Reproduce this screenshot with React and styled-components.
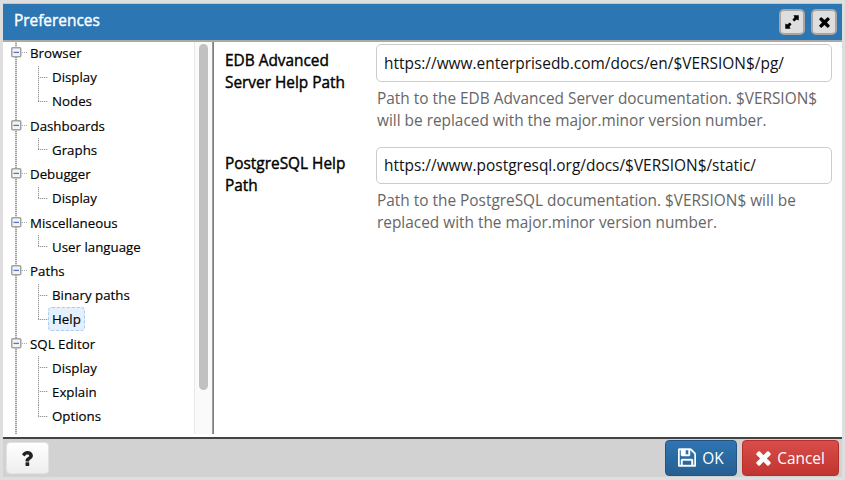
import React from 'react';
import styled, { createGlobalStyle, css } from 'styled-components';

const Global = createGlobalStyle`
  * { box-sizing: border-box; }
  body { margin: 0; background: #dedede; font-family: "Open Sans", sans-serif; color: #111; overflow: hidden; }
  button, input { font-family: inherit; }
`;

const Dialog = styled.div`
  width: 845px;
  height: 480px;
  padding: 3px;
  display: flex;
  flex-direction: column;
  background: #dedede;
`;

const Header = styled.header`
  flex: none;
  height: 39px;
  padding: 0 5px 0 11px;
  display: flex;
  align-items: center;
  background: #2c76b4;
  border-top: 1px solid #c9c4be;
  border-bottom: 2px solid #aaa9a8;
`;

const Title = styled.h1`
  flex: 1;
  margin: 0;
  padding-bottom: 2px;
  font-size: 15.4px;
  line-height: 20px;
  font-weight: 400;
  color: #fff;
  -webkit-text-stroke: 0.4px #fff;
`;

const WindowButton = styled.button`
  width: 26px;
  height: 26px;
  margin-left: 6px;
  padding: 0;
  display: flex;
  align-items: center;
  justify-content: center;
  background: #dedede;
  border: 2px solid #a9a5a3;
  border-radius: 5px;
  color: #000;
`;

const Body = styled.main`
  flex: none;
  height: 395px;
  padding-bottom: 3px;
  display: flex;
  background: #fff;
`;

const Sidebar = styled.nav`
  width: 191px;
  overflow: hidden;
`;

const TreeList = styled.ul`
  list-style: none;
  margin: -0.6px 0 0;
  padding: 0 0 6px 5px;
  background: repeating-linear-gradient(#a4a4a4 0 1px, #dedede 1px 2px) 12px 0 / 2px 100% no-repeat;
`;

const rowText = css`
  height: 24.23px;
  display: flex;
  align-items: center;
  font-size: 13.3px;
  line-height: 22px;
  color: #000;
  -webkit-text-stroke: 0.15px #000;
`;

const Group = styled.div`
  ${rowText}
  padding-bottom: 1px;
`;

const Toggle = styled.svg`
  width: 17px;
  height: 11px;
  margin: -1px 2px 0 3px;
  flex: none;
`;

const Children = styled.ul`
  list-style: none;
  margin: 0;
  padding: 0 0 0 29.5px;
`;

const Leaf = styled.li`
  ${rowText}
`;

const Branch = styled.span`
  width: 10.5px;
  align-self: stretch;
  flex: none;
  background:
    repeating-linear-gradient(#999 0 1px, #e2e2e2 1px 2px) 0 0 / 1px ${p => (p.$last ? '11px' : '100%')} no-repeat,
    repeating-linear-gradient(90deg, #999 0 1px, #e2e2e2 1px 2px) 0 11px / 12px 1px no-repeat;
`;

const LeafLabel = styled.span`
  margin-top: -1px;
  padding: 0 3px;
  border: 1px dashed ${p => (p.$selected ? '#a9cbf3' : 'transparent')};
  border-radius: 4px;
  background: ${p => (p.$selected ? '#e4f0fd' : 'transparent')};
`;

const ScrollTrack = styled.div`
  width: 18px;
  padding: 2px 3px 0 4px;
  background: #fafafa;
  border-left: 1px solid #e8e8e8;
`;

const ScrollThumb = styled.div`
  width: 9px;
  height: 346px;
  border-radius: 5px;
  background: #c1c1c1;
`;

const Divider = styled.div`
  width: 2px;
  background: linear-gradient(90deg, #9c9c9c 50%, #808080 50%);
`;

const Form = styled.form`
  flex: 1;
  padding: 2px 10px 0 11px;
`;

const Field = styled.div`
  height: 102.5px;
  display: grid;
  grid-template-columns: 151px 1fr;
`;

const Label = styled.label`
  width: 135px;
  padding-top: 6px;
  font-size: 15.4px;
  line-height: 22px;
  color: #000;
  -webkit-text-stroke: 0.4px #000;
`;

const Input = styled.input`
  display: block;
  width: 456px;
  height: 37.5px;
  padding: 0 7px;
  border: 1px solid #ccc;
  border-radius: 5px;
  background: #fff;
  outline: 0;
  font-size: 15.45px;
  color: #111;
`;

const Help = styled.p`
  margin: 6px 0 0 1px;
  font-size: 15.4px;
  line-height: 22px;
  color: #666;
  white-space: nowrap;
`;

const Footer = styled.footer`
  flex: 1;
  padding: 1px 3px 1px 3px;
  display: flex;
  align-items: center;
  gap: 5px;
  background: #d2d2d2;
  border-top: 2px solid #444;
`;

const Spacer = styled.div`
  flex: 1;
`;

const tones = {
  plain: css`
    width: 43px; height: 32px; color: #222;
    background: linear-gradient(#fff, #eee);
    border: 1px solid #e2e2e2;
  `,
  primary: css`
    width: 72px; height: 36px; color: #fff;
    background: linear-gradient(#2e75b3, #265f90);
    border: 1px solid #245580;
  `,
  danger: css`
    width: 97px; height: 36px; color: #fff;
    background: linear-gradient(#d84e4a, #c23430);
    border: 1px solid #b92c28;
  `,
};

const Button = styled.button`
  flex: none;
  padding: 0;
  display: flex;
  align-items: center;
  justify-content: center;
  gap: 6px;
  border-radius: 4px;
  font-size: 15.4px;
  ${p => tones[p.$tone]}
`;

const Glyph = styled.svg`
  display: block;
  fill: currentColor;
`;

const SaveIcon = () => (
  <Glyph width="18" height="21" viewBox="0 80 1536 1792" stroke="currentColor" strokeWidth="40">
    <path d="M384 1536h768v-384H384v384zm896 0h128V640q0-14-10-38.500t-20-34.500l-281-281q-10-10-34-20t-39-10v416q0 40-28 68t-68 28H352q-40 0-68-28t-28-68V256H128v1280h128v-416q0-40 28-68t68-28h832q40 0 68 28t28 68v416zM896 608V288q0-13-9.500-22.500T864 256H672q-13 0-22.500 9.500T640 288v320q0 13 9.500 22.500t22.500 9.500h192q13 0 22.500-9.500T896 608zm640 32v928q0 40-28 68t-68 28H96q-40 0-68-28t-28-68V224q0-40 28-68t68-28h928q40 0 88 20t76 48l280 280q28 28 48 76t20 88z" />
  </Glyph>
);

const CrossIcon = ({ size }) => (
  <Glyph width={size} height={size} viewBox="100 334 1208 1228">
    <path d="M1298 1322q0 40-28 68l-136 136q-28 28-68 28t-68-28l-294-294-294 294q-28 28-68 28t-68-28l-136-136q-28-28-28-68t28-68l294-294-294-294q-28-28-28-68t28-68l136-136q28-28 68-28t68 28l294 294 294-294q28-28 68-28t68 28l136 136q28 28 28 68t-28 68l-294 294 294 294q28 28 28 68z" transform="translate(0 -12)" />
  </Glyph>
);

const ExpandIcon = () => (
  <Glyph width="14" height="14" viewBox="0 0 14 14">
    <path d="M8.500 0.300H13.700V5.500L11.700 4.500L9.300 6.600L7.400 4.700L9.500 2.300ZM5.500 13.700H0.300V8.500L2.300 9.500L4.700 7.400L6.600 9.300L4.500 11.700Z" />
  </Glyph>
);

const QuestionIcon = () => (
  <Glyph width="11" height="15" viewBox="80 193 950 1279" preserveAspectRatio="none">
    <path d="M704 1192v240q0 16-12 28t-28 12H424q-16 0-28-12t-12-28v-240q0-16 12-28t28-12h240q16 0 28 12t12 28zm316-600q0 54-15.500 101t-35 76.500-55 59.500-57.500 43.500-61 35.500q-41 23-68.500 65T700 1041q0 17-12 32.500T660 1089H420q-15 0-25.500-18.500T384 1033v-45q0-83 65-156.500T592 723q59-27 84-56t25-76q0-42-46.500-74T547 485q-65 0-108 29-35 25-107 115-13 16-31 16-12 0-25-8L112 512q-13-10-15.500-25t5.500-28q160-266 464-266 80 0 161 31t146 83 106 127.500 41 158.500z" />
  </Glyph>
);

const ToggleIcon = () => (
  <Toggle viewBox="0 0 17 11">
    <rect x=".75" y=".75" width="9" height="9" rx="1" fill="#f4f4f4" stroke="#a2a2a2" strokeWidth="1.5" />
    <path d="M2.500 5.400h5.500" stroke="#5577cc" strokeWidth="1.300" />
    <path d="M11 5.500h5.500" stroke="#aaa" strokeDasharray="1 1" />
  </Toggle>
);

const tree = [
  ['Browser', ['Display', 'Nodes']],
  ['Dashboards', ['Graphs']],
  ['Debugger', ['Display']],
  ['Miscellaneous', ['User language']],
  ['Paths', ['Binary paths', 'Help']],
  ['SQL Editor', ['Display', 'Explain', 'Options']],
];

const fields = [
  {
    id: 'edb',
    label: 'EDB Advanced Server Help Path',
    value: 'https://www.enterprisedb.com/docs/en/$VERSION$/pg/',
    help: ['Path to the EDB Advanced Server documentation. $VERSION$', 'will be replaced with the major.minor version number.'],
  },
  {
    id: 'pg',
    label: 'PostgreSQL Help Path',
    value: 'https://www.postgresql.org/docs/$VERSION$/static/',
    help: ['Path to the PostgreSQL documentation. $VERSION$ will be', 'replaced with the major.minor version number.'],
  },
];

export default function App() {
  return (
    <Dialog>
      <Global />
      <Header>
        <Title>Preferences</Title>
        <WindowButton aria-label="Maximize"><ExpandIcon /></WindowButton>
        <WindowButton aria-label="Close"><CrossIcon size={11} /></WindowButton>
      </Header>
      <Body>
        <Sidebar>
          <TreeList>
            {tree.map(([name, items]) => (
              <li key={name}>
                <Group><ToggleIcon />{name}</Group>
                <Children>
                  {items.map((item, i) => (
                    <Leaf key={item}>
                      <Branch $last={i === items.length - 1} />
                      <LeafLabel $selected={item === 'Help'}>{item}</LeafLabel>
                    </Leaf>
                  ))}
                </Children>
              </li>
            ))}
          </TreeList>
        </Sidebar>
        <ScrollTrack><ScrollThumb /></ScrollTrack>
        <Divider />
        <Form>
          {fields.map(f => (
            <Field key={f.id}>
              <Label htmlFor={f.id}>{f.label}</Label>
              <div>
                <Input id={f.id} defaultValue={f.value} spellCheck={false} />
                <Help>{f.help[0]}<br />{f.help[1]}</Help>
              </div>
            </Field>
          ))}
        </Form>
      </Body>
      <Footer>
        <Button $tone="plain" aria-label="Help"><QuestionIcon /></Button>
        <Spacer />
        <Button $tone="primary"><SaveIcon />OK</Button>
        <Button $tone="danger"><CrossIcon size={15} />Cancel</Button>
      </Footer>
    </Dialog>
  );
}
